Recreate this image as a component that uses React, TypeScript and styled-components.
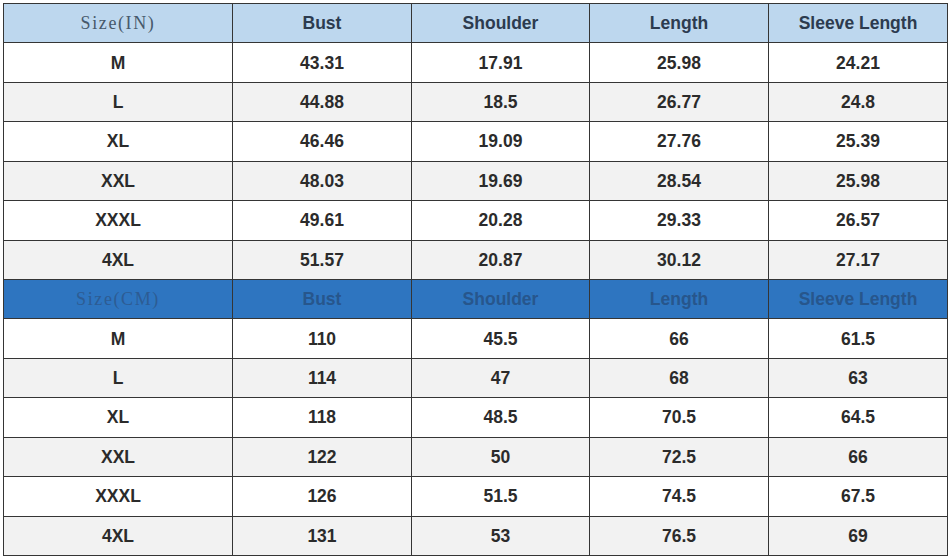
import React from 'react'
import styled, { createGlobalStyle } from 'styled-components'

const GlobalStyle = createGlobalStyle`
    html, body {
        margin: 0;
        padding: 0;
        background: #ffffff;
    }
    body {
        font-family: "Liberation Sans", Arial, sans-serif;
    }
`;

const Page = styled.div`
    width: 950px;
    height: 558px;
    padding: 3px 0 0 3px;
    box-sizing: border-box;
    background: #fff;
`;

const Grid = styled.div`
    width: 945px;
    height: 553px;
    box-sizing: border-box;
    display: grid;
    grid-template-columns: 228px 178px 177px 178px 1fr;
    grid-template-rows: repeat(14, 1fr);
    gap: 1px;
    background: #353535;
    border: 1px solid #353535;
`;

type Tone = 'light' | 'blue' | 'white' | 'grey';

const bg: Record<Tone, string> = {
    light: '#bdd7ee',
    blue: '#2e75c0',
    white: '#ffffff',
    grey: '#f2f2f2',
};

const fg: Record<Tone, string> = {
    light: '#2c3b4f',
    blue: '#27568c',
    white: '#2b2b2b',
    grey: '#2b2b2b',
};

const Cell = styled.div<{ $tone: Tone; $label?: boolean }>`
    display: flex;
    align-items: center;
    justify-content: center;
    background: ${p => bg[p.$tone]};
    color: ${p => (p.$label ? (p.$tone === 'blue' ? '#2d5c93' : '#46596b') : fg[p.$tone])};
    font-family: ${p => (p.$label ? '"Liberation Serif", "DejaVu Serif", serif' : '"Liberation Sans", Arial, sans-serif')};
    font-weight: 400;
    font-weight: ${p => (p.$label ? 400 : 700)};
    font-size: ${p => (p.$label ? '18px' : '17.5px')};
    letter-spacing: ${p => (p.$label ? '1.6px' : 'normal')};
    padding-top: 1px;
`;

const headers = ['Bust', 'Shoulder', 'Length', 'Sleeve Length'];

const inches = [
    ['M', '43.31', '17.91', '25.98', '24.21'],
    ['L', '44.88', '18.5', '26.77', '24.8'],
    ['XL', '46.46', '19.09', '27.76', '25.39'],
    ['XXL', '48.03', '19.69', '28.54', '25.98'],
    ['XXXL', '49.61', '20.28', '29.33', '26.57'],
    ['4XL', '51.57', '20.87', '30.12', '27.17'],
];

const cms = [
    ['M', '110', '45.5', '66', '61.5'],
    ['L', '114', '47', '68', '63'],
    ['XL', '118', '48.5', '70.5', '64.5'],
    ['XXL', '122', '50', '72.5', '66'],
    ['XXXL', '126', '51.5', '74.5', '67.5'],
    ['4XL', '131', '53', '76.5', '69'],
];

function Section({ label, tone, rows }: { label: string; tone: Tone; rows: string[][] }) {
    return (
        <>
            <Cell $tone={tone} $label>{label}</Cell>
            {headers.map(h => (
                <Cell key={h} $tone={tone}>{h}</Cell>
            ))}
            {rows.map((r, i) =>
                r.map((v, j) => (
                    <Cell key={`${i}-${j}`} $tone={i % 2 === 0 ? 'white' : 'grey'}>{v}</Cell>
                ))
            )}
        </>
    );
}

export default function App() {
    return (
        <Page>
            <GlobalStyle />
            <Grid>
                <Section label="Size(IN)" tone="light" rows={inches} />
                <Section label="Size(CM)" tone="blue" rows={cms} />
            </Grid>
        </Page>
    );
}
